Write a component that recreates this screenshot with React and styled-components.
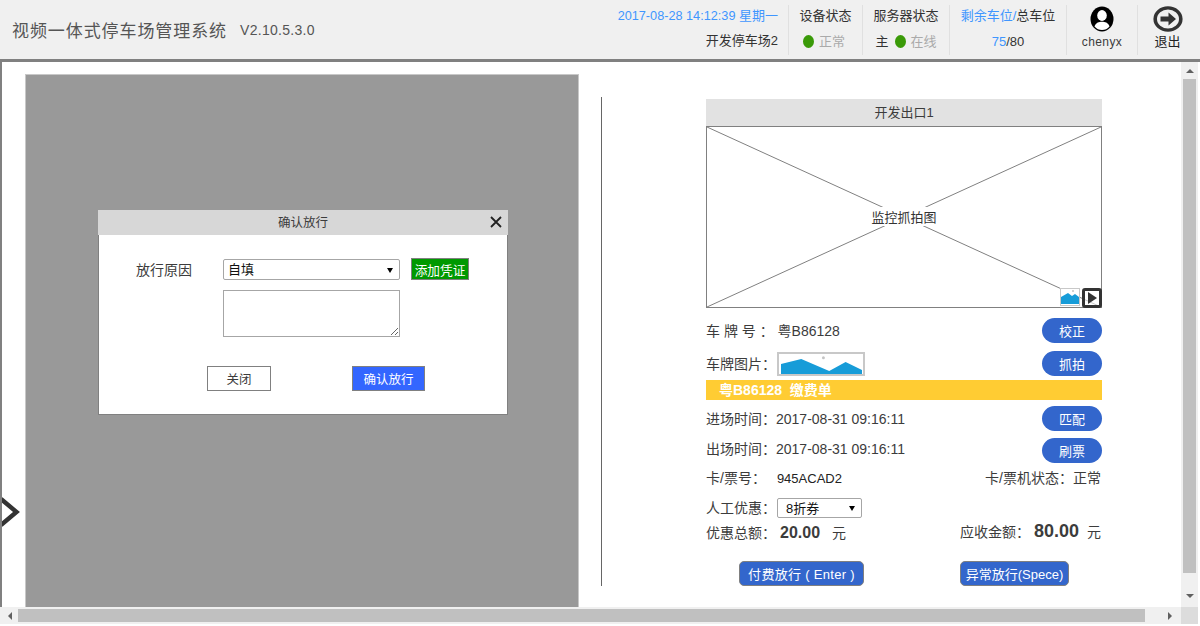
import React from "react"
import styled, { createGlobalStyle } from "styled-components"

const FONT = `"Liberation Sans", "Noto Sans CJK SC", Arial, sans-serif`;

const GlobalStyle = createGlobalStyle`
    html, body {
        margin: 0;
        padding: 0;
        background: #fff;
        overflow: hidden;
    }
    body, select, textarea, button {
        font-family: ${FONT};
    }
`;

const AvatarIcon = () =>
    <svg width="24" height="26" viewBox="0 0 24 26">
        <ellipse cx="12" cy="13" rx="11.5" ry="12.5" fill="#000"/>
        <ellipse cx="12" cy="9.5" rx="4.8" ry="5.4" fill="#fff"/>
        <path d="M4.5 20.5 C6 16.5 9 15.8 12 15.8 C15 15.8 18 16.5 19.5 20.5 C17.5 23 15 24 12 24 C9 24 6.5 23 4.5 20.5 Z" fill="#fff"/>
    </svg>;

const ExitIcon = () =>
    <svg width="30" height="26" viewBox="0 0 30 30" preserveAspectRatio="none">
        <circle cx="15" cy="15" r="12.8" fill="none" stroke="#333" strokeWidth="3.6"/>
        <path d="M15.5 7.5 L23 15 L15.5 22.5 V18 H7.5 V12 H15.5 Z" fill="#333"/>
    </svg>;

const Mountains = () =>
    <svg width="100%" height="100%" viewBox="0 0 84 20" preserveAspectRatio="none">
        <circle cx="44" cy="3.7" r="1.5" fill="#c4c4c4"/>
        <path d="M0 10 L21 5 L50 17 L67 8 L84 16 V20 H0 Z" fill="#179cd8"/>
    </svg>;

const SmallMountains = () =>
    <svg width="100%" height="100%" viewBox="0 0 18 16" preserveAspectRatio="none">
        <circle cx="12" cy="2" r="1" fill="#c4c4c4"/>
        <path d="M0 8 L7 4 L11 7 L14 5 L18 8 V15 H0 Z" fill="#179cd8"/>
    </svg>;

const Header = () =>
    <TopBar>
        <Brand>
            <BrandName>视频一体式停车场管理系统</BrandName>
            <Version>V2.10.5.3.0</Version>
        </Brand>
        <ClockBlock>
            <Clock>2017-08-28 14:12:39 <span>星期一</span></Clock>
            <BlockLine>开发停车场2</BlockLine>
        </ClockBlock>
        <Block width={74}>
            <BlockLine>设备状态</BlockLine>
            <StatusLine pad={4}><Dot/><Muted>正常</Muted></StatusLine>
        </Block>
        <Block width={87}>
            <BlockLine>服务器状态</BlockLine>
            <StatusLine>主<Dot/><Muted>在线</Muted></StatusLine>
        </Block>
        <Block width={117}>
            <BlockLine><Blue>剩余车位/</Blue>总车位</BlockLine>
            <BlockLine><Blue>75</Blue>/80</BlockLine>
        </Block>
        <IconBlock width={71}>
            <AvatarIcon/>
            <UserName>chenyx</UserName>
        </IconBlock>
        <IconBlock width={60}>
            <ExitIcon/>
            <ExitLabel>退出</ExitLabel>
        </IconBlock>
    </TopBar>;

const Dialog = () =>
    <DialogBox>
        <DialogTitle>
            确认放行
            <CloseMark width="12" height="12" viewBox="0 0 12 12">
                <path d="M1 1 L11 11 M11 1 L1 11" stroke="#222" strokeWidth="1.8"/>
            </CloseMark>
        </DialogTitle>
        <DialogBody>
            <ReasonGrid>
                <ReasonLabel>放行原因</ReasonLabel>
                <SelectWrap width={177} height={21}>
                    <NativeSelect defaultValue="自填"><option>自填</option></NativeSelect>
                </SelectWrap>
                <GreenButton>添加凭证</GreenButton>
                <ReasonNote/>
            </ReasonGrid>
            <DialogActions>
                <PlainButton>关闭</PlainButton>
                <ConfirmButton>确认放行</ConfirmButton>
            </DialogActions>
        </DialogBody>
    </DialogBox>;

const ExitPanel = () =>
    <Panel>
        <PanelTitle>开发出口1</PanelTitle>
        <Snapshot>
            <CrossLines width="100%" height="100%" viewBox="0 0 394 180" preserveAspectRatio="none">
                <path d="M0 0 L394 180 M394 0 L0 180" stroke="#808080" strokeWidth="1" fill="none"/>
            </CrossLines>
            <SnapshotLabel>监控抓拍图</SnapshotLabel>
            <Thumb><SmallMountains/></Thumb>
            <PlayBadge>
                <svg width="12" height="12" viewBox="0 0 12 12"><path d="M2 0 L11 6 L2 12 Z" fill="#333"/></svg>
            </PlayBadge>
        </Snapshot>

        <ButtonRow top={10}>
            <Text>车 牌 号 ： 粤B86128</Text>
            <Pill>校正</Pill>
        </ButtonRow>
        <ButtonRow top={8}>
            <PlateLine>
                <Text>车牌图片：</Text>
                <PlatePicture><Mountains/></PlatePicture>
            </PlateLine>
            <Pill>抓拍</Pill>
        </ButtonRow>
        <BillBar>粤B86128&nbsp;&nbsp;缴费单</BillBar>
        <ButtonRow top={6}>
            <Text>进场时间：2017-08-31 09:16:11</Text>
            <Pill>匹配</Pill>
        </ButtonRow>
        <ButtonRow top={7}>
            <RaisedText>出场时间：2017-08-31 09:16:11</RaisedText>
            <Pill>刷票</Pill>
        </ButtonRow>
        <InfoRow top={5}>
            <Text>卡/票号：<CardNo>945ACAD2</CardNo></Text>
            <Text>卡/票机状态：正常</Text>
        </InfoRow>
        <InfoRow top={10}>
            <PlateLine>
                <Text>人工优惠：</Text>
                <OfferSelect width={85} height={20}>
                    <NativeSelect defaultValue="8折券" indent={8}><option>8折券</option></NativeSelect>
                </OfferSelect>
            </PlateLine>
        </InfoRow>
        <AmountRow>
            <Text>优惠总额：<Amount>20.00</Amount>元</Text>
            <RaisedText>应收金额：<BigAmount>80.00</BigAmount>元</RaisedText>
        </AmountRow>
        <ReleaseRow>
            <ReleaseButton width={125} spread>付费放行 ( Enter )</ReleaseButton>
            <ReleaseButton width={109}>异常放行(Spece)</ReleaseButton>
        </ReleaseRow>
    </Panel>;

const App = () =>
    <Page>
        <GlobalStyle/>
        <Header/>
        <Frame>
            <Viewport>
                <Content>
                    <VideoPanel>
                        <Dialog/>
                    </VideoPanel>
                    <Divider/>
                    <ExitPanel/>
                    <SideArrow width="20" height="30" viewBox="0 0 20 30">
                        <path d="M1 2 L16.5 15 L1 28" fill="none" stroke="#333" strokeWidth="4.4"/>
                    </SideArrow>
                </Content>
                <VerticalBar>
                    <ArrowUp/>
                    <VerticalThumb/>
                    <ArrowDown/>
                </VerticalBar>
            </Viewport>
            <HorizontalBar>
                <ArrowLeft/>
                <HorizontalThumb/>
                <ArrowRight/>
                <Corner/>
            </HorizontalBar>
        </Frame>
    </Page>;

const Page = styled.div`
    width: 1200px;
    height: 626px;
    display: flex;
    flex-direction: column;
    overflow: hidden;
    color: #3c3c3c;
    font-size: 13px;
`;

/* header */
const TopBar = styled.header`
    height: 59px;
    flex: none;
    display: flex;
    align-items: center;
    padding-right: 3px;
    background: #f0f0f0;
    border-bottom: 3px solid #808080;
`;
const Brand = styled.div`
    flex: 1;
    display: flex;
    align-items: center;
    padding: 0 0 0 12px;
    color: #555;
`;
const BrandName = styled.span`
    font-size: 17px;
    letter-spacing: 0.92px;
`;
const Version = styled.span`
    margin-left: 13px;
    font-size: 14px;
    letter-spacing: 0.28px;
`;
const Block = styled.div`
    width: ${props => props.width}px;
    height: 50px;
    box-sizing: border-box;
    display: flex;
    flex-direction: column;
    align-items: center;
    gap: 8px;
    padding-top: 2px;
    border-left: 1px solid #e0e0e0;
`;
const ClockBlock = styled.div`
    height: 50px;
    box-sizing: border-box;
    display: flex;
    flex-direction: column;
    align-items: flex-end;
    gap: 7px;
    padding: 2px 10px 0 0;
`;
const Clock = styled.div`
    font-size: 12.7px;
    line-height: 18px;
    color: #3f96ff;
    span {
        font-size: 13px;
    }
`;
const BlockLine = styled.div`
    font-size: 13px;
    line-height: 18px;
    color: #333;
`;
const StatusLine = styled.div`
    display: flex;
    align-items: center;
    gap: 5px;
    padding-right: ${props => props.pad || 0}px;
    font-size: 13px;
    line-height: 18px;
    color: #333;
`;
const Dot = styled.i`
    width: 11px;
    height: 13px;
    margin-left: 1px;
    border-radius: 50%;
    background: #3a9a08;
`;
const Muted = styled.span`
    font-size: 13px;
    color: #aaa;
`;
const Blue = styled.span`
    color: #3f96ff;
`;
const IconBlock = styled.div`
    width: ${props => props.width}px;
    height: 50px;
    box-sizing: border-box;
    display: flex;
    flex-direction: column;
    align-items: center;
    padding-top: 1px;
    border-left: 1px solid #e0e0e0;
`;
const UserName = styled.div`
    font-size: 12px;
    line-height: 14px;
    margin-top: 3px;
    letter-spacing: 0.4px;
`;
const ExitLabel = styled.div`
    font-size: 13px;
    line-height: 14px;
    margin-top: 3px;
    color: #222;
`;

/* frame and scrollbars */
const Frame = styled.div`
    flex: 1;
    display: flex;
    flex-direction: column;
    min-height: 0;
    padding-right: 2px;
`;
const Viewport = styled.div`
    height: 545px;
    display: flex;
    border-left: 2px solid #808080;
`;
const Content = styled.main`
    position: relative;
    flex: 1;
    display: flex;
    align-items: flex-start;
    overflow: hidden;
    background: #fff;
`;
const VerticalBar = styled.div`
    width: 17px;
    flex: none;
    display: flex;
    flex-direction: column;
    align-items: center;
    background: #f0f0f0;
`;
const VerticalThumb = styled.div`
    width: 13px;
    height: 494px;
    margin-top: 6px;
    background: #c0c0c0;
`;
const ArrowUp = styled.i`
    margin-top: 7px;
    border: 4px solid transparent;
    border-top: 0;
    border-bottom: 4px solid #606060;
`;
const ArrowDown = styled.i`
    margin-top: 21px;
    border: 4px solid transparent;
    border-bottom: 0;
    border-top: 4px solid #606060;
`;
const HorizontalBar = styled.div`
    height: 17px;
    display: flex;
    align-items: center;
    background: #f0f0f0;
`;
const HorizontalThumb = styled.div`
    width: 1127px;
    height: 13px;
    margin-left: 6px;
    background: #c0c0c0;
`;
const ArrowLeft = styled.i`
    margin-left: 8px;
    border: 4px solid transparent;
    border-left: 0;
    border-right: 4px solid #606060;
`;
const ArrowRight = styled.i`
    margin-left: 23px;
    border: 4px solid transparent;
    border-right: 0;
    border-left: 4px solid #606060;
`;
const Corner = styled.div`
    width: 17px;
    height: 17px;
    margin-left: auto;
    background: #dcdcdc;
`;
const SideArrow = styled.svg`
    position: absolute;
    left: -2px;
    top: 435px;
`;

/* left video area */
const VideoPanel = styled.section`
    position: relative;
    width: 552px;
    height: 560px;
    flex: none;
    margin: 12px 0 0 23px;
    background: #999;
    border: 1px solid #c8c8c8;
    border-bottom: 0;
`;
const Divider = styled.div`
    width: 1px;
    height: 489px;
    flex: none;
    margin: 35px 0 0 22px;
    background: #666;
`;

/* dialog */
const DialogBox = styled.div`
    position: absolute;
    left: 72px;
    top: 135px;
    width: 410px;
`;
const DialogTitle = styled.div`
    position: relative;
    height: 25px;
    line-height: 26px;
    text-align: center;
    font-size: 12.5px;
    color: #3c3c3c;
    background: #d7d7d7;
`;
const CloseMark = styled.svg`
    position: absolute;
    right: 6px;
    top: 6px;
`;
const DialogBody = styled.div`
    height: 180px;
    box-sizing: border-box;
    padding: 24px 0 0 37px;
    background: #fff;
    border: 1px solid #808080;
    border-top: 0;
`;
const ReasonGrid = styled.div`
    display: grid;
    grid-template-columns: 87px 177px 58px;
    row-gap: 9px;
`;
const ReasonLabel = styled.div`
    font-size: 14px;
    line-height: 22px;
    color: #3c3c3c;
`;
const SelectWrap = styled.div`
    position: relative;
    width: ${props => props.width}px;
    height: ${props => props.height}px;
    &::after {
        content: "";
        position: absolute;
        right: 7px;
        top: 50%;
        margin-top: -2px;
        border: 3px solid transparent;
        border-bottom: 0;
        border-top: 5px solid #000;
        pointer-events: none;
    }
`;
const OfferSelect = styled(SelectWrap)`
    margin-left: 1px;
`;
const NativeSelect = styled.select`
    width: 100%;
    height: 100%;
    box-sizing: border-box;
    appearance: none;
    margin: 0;
    padding: 0 0 0 ${props => props.indent || 4}px;
    font-size: 13px;
    color: #111;
    background: #fff;
    border: 1px solid #a6a6a6;
    border-radius: 2px;
    outline: none;
`;
const GreenButton = styled.button`
    width: 58px;
    height: 22px;
    margin: -1px 0 0 11px;
    padding: 0;
    box-sizing: border-box;
    font-size: 12.7px;
    white-space: nowrap;
    color: #fff;
    background: #090;
    border: 1px solid #808080;
`;
const ReasonNote = styled.textarea`
    grid-column: 2;
    width: 177px;
    height: 47px;
    box-sizing: border-box;
    margin: 0;
    display: block;
    background: #fff;
    border: 1px solid #a6a6a6;
    outline: none;
`;
const DialogActions = styled.div`
    display: flex;
    margin: 29px 0 0 71px;
    gap: 81px;
`;
const PlainButton = styled.button`
    width: 64px;
    height: 25px;
    padding: 0;
    font-size: 12.5px;
    color: #3c3c3c;
    background: #fff;
    border: 1px solid #808080;
`;
const ConfirmButton = styled.button`
    width: 73px;
    height: 25px;
    padding: 0;
    font-size: 12.5px;
    color: #fff;
    background: #36f;
    border: 1px solid #808080;
`;

/* right exit panel */
const Panel = styled.section`
    width: 396px;
    flex: none;
    margin: 37px 0 0 104px;
`;
const PanelTitle = styled.div`
    height: 27px;
    line-height: 28px;
    text-align: center;
    font-size: 13px;
    background: #e2e2e2;
`;
const Snapshot = styled.div`
    position: relative;
    height: 182px;
    box-sizing: border-box;
    padding-bottom: 2px;
    display: flex;
    align-items: center;
    justify-content: center;
    border: 1px solid #808080;
`;
const CrossLines = styled.svg`
    position: absolute;
    inset: 0;
`;
const SnapshotLabel = styled.span`
    position: relative;
    background: #fff;
    font-size: 13px;
    color: #333;
`;
const Thumb = styled.div`
    position: absolute;
    right: 21px;
    bottom: 1px;
    width: 20px;
    height: 18px;
    box-sizing: border-box;
    background: #fff;
    border: 1px solid #c8c8c8;
`;
const PlayBadge = styled.div`
    position: absolute;
    right: -1px;
    bottom: -1px;
    width: 20px;
    height: 20px;
    box-sizing: border-box;
    display: flex;
    align-items: center;
    justify-content: center;
    background: rgba(255, 255, 255, 0.6);
    border: 3px solid #333;
    border-radius: 3px;
`;
const ButtonRow = styled.div`
    display: flex;
    align-items: center;
    justify-content: space-between;
    margin-top: ${props => props.top}px;
`;
const InfoRow = styled.div`
    display: flex;
    align-items: center;
    justify-content: space-between;
    height: 20px;
    padding-right: 1px;
    margin-top: ${props => props.top}px;
`;
const Text = styled.span`
    font-size: 14px;
    line-height: 18px;
    color: #3c3c3c;
    white-space: pre;
`;
const RaisedText = styled(Text)`
    margin-bottom: 3px;
`;
const CardNo = styled.span`
    margin-left: 11px;
    font-size: 13px;
    color: #222;
`;
const PlateLine = styled.div`
    display: flex;
    align-items: center;
`;
const PlatePicture = styled.div`
    width: 88px;
    height: 24px;
    box-sizing: border-box;
    margin-left: 1px;
    padding: 0 1px 0 2px;
    border: 2px solid #c8c8c8;
`;
const Pill = styled.button`
    width: 60px;
    height: 25px;
    padding: 0;
    font-size: 13px;
    color: #fff;
    background: #36c;
    border: 0;
    border-radius: 13px;
`;
const BillBar = styled.div`
    height: 20px;
    margin-top: 4px;
    padding-left: 13px;
    line-height: 21px;
    font-size: 14px;
    font-weight: 700;
    color: #fff;
    background: #fc3;
`;
const AmountRow = styled.div`
    display: flex;
    align-items: center;
    justify-content: space-between;
    height: 24px;
    padding-right: 1px;
    margin-top: 3px;
`;
const Amount = styled.b`
    margin: 0 12px 0 4px;
    font-size: 16px;
`;
const BigAmount = styled(Amount)`
    margin-right: 8px;
    font-size: 18px;
`;
const ReleaseRow = styled.div`
    display: flex;
    justify-content: space-between;
    margin-top: 16px;
    padding: 0 33px;
`;
const ReleaseButton = styled.button`
    width: ${props => props.width}px;
    height: 25px;
    padding: 0;
    white-space: nowrap;
    font-size: 13px;
    letter-spacing: ${props => props.spread ? "0.3px" : "0"};
    color: #fff;
    background: #36c;
    border: 1px solid #808080;
    border-radius: 5px;
`;

export default App
